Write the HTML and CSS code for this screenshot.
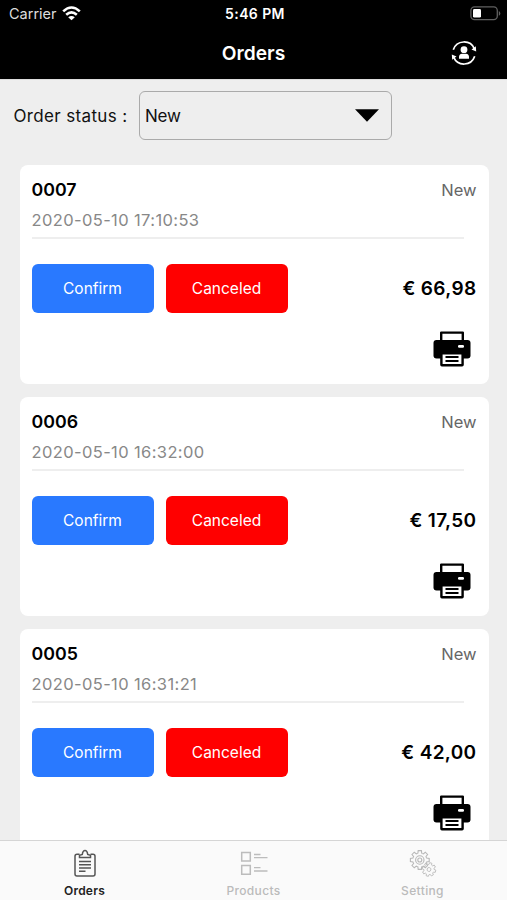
FILE: index.html
```
<!DOCTYPE html>
<html lang="en">
<head>
<meta charset="utf-8">
<title>Orders</title>
<link rel="stylesheet" href="styles.css">
</head>
<body>
<svg class="defs" aria-hidden="true">
  <symbol id="printer" viewBox="0 0 38 36">
    <path d="M8.2 10V1.6h21.6V10" fill="none" stroke="currentColor" stroke-width="2.4" stroke-linejoin="round"/>
    <rect x="0.5" y="9" width="37" height="18.6" rx="3" fill="currentColor"/>
    <rect x="25" y="14" width="6" height="2.8" rx="1.2" fill="#fff"/>
    <rect x="8.4" y="22.2" width="21.2" height="12" rx=".5" fill="#fff" stroke="currentColor" stroke-width="2.4"/>
    <path d="M12.5 26h13M12.5 30h13" stroke="currentColor" stroke-width="2"/>
  </symbol>
  <g id="gear">
    <path id="seg" d="M6.47-2.68 6.85-1.9 9.4-1.6V1.6L6.85 1.9 6.47 2.68"/>
    <use href="#seg" transform="rotate(45)"/><use href="#seg" transform="rotate(90)"/>
    <use href="#seg" transform="rotate(135)"/><use href="#seg" transform="rotate(180)"/>
    <use href="#seg" transform="rotate(225)"/><use href="#seg" transform="rotate(270)"/>
    <use href="#seg" transform="rotate(315)"/>
  </g>
</svg>
<div class="app">
  <header class="top">
    <div class="status">
      <div class="carrier"><span>Carrier</span>
        <svg width="19" height="15" viewBox="0 0 19 15" fill="none" stroke="#fff" stroke-width="2.6"><path d="M1.2 5.4Q9.5-2.4 17.8 5.4M4.2 8.8Q9.5 4 14.8 8.8"/><path d="M9.5 14.3 6.2 11.2Q9.5 8.7 12.8 11.2Z" fill="#fff" stroke="none"/></svg>
      </div>
      <span class="time">5:46 PM</span>
      <svg class="battery" width="31" height="15" viewBox="0 0 31 15"><rect x=".9" y=".9" width="26.4" height="12.8" rx="3.6" fill="none" stroke="#606060" stroke-width="1.3"/><rect x="3" y="3" width="8" height="8.6" rx="1.4" fill="#fff"/><path d="M28.8 5v4.8q1.5-.6 1.5-2.4t-1.5-2.4" fill="#606060"/></svg>
    </div>
    <div class="nav">
      <h1>Orders</h1>
      <svg class="sync" width="26" height="26" viewBox="0 0 26 26"><path d="M2.3 9.7A11.3 11.3 0 0 1 23.4 8.8M23.7 16.3A11.3 11.3 0 0 1 2.6 17.2" fill="none" stroke="#fff" stroke-width="1.7"/><path d="M20.5 9.5 24.8 6.3 25.2 11.4ZM5.5 16.5 1.2 19.7.8 14.6Z" fill="#fff"/><circle cx="13" cy="9.7" r="3.4" fill="#fff"/><path d="M8 18.7V17q0-3 3-3.2h4q3 .2 3 3.2v1.7z" fill="#fff"/></svg>
    </div>
  </header>
  <main>
    <div class="filter"><span class="label">Order status :</span>
      <div class="select"><span>New</span><svg width="24" height="13" viewBox="0 0 24 13"><path d="M0 .3h24L12 12.7z"/></svg></div>
    </div>
    <section class="card">
      <div class="row"><b class="num">0007</b><span class="state">New</span></div>
      <div class="date">2020-05-10 17:10:53</div>
      <div class="actions"><button class="confirm">Confirm</button><button class="cancel">Canceled</button><b class="price">€ 66,98</b></div>
      <svg class="print"><use href="#printer"/></svg>
    </section>
    <section class="card">
      <div class="row"><b class="num">0006</b><span class="state">New</span></div>
      <div class="date">2020-05-10 16:32:00</div>
      <div class="actions"><button class="confirm">Confirm</button><button class="cancel">Canceled</button><b class="price">€ 17,50</b></div>
      <svg class="print"><use href="#printer"/></svg>
    </section>
    <section class="card">
      <div class="row"><b class="num">0005</b><span class="state">New</span></div>
      <div class="date">2020-05-10 16:31:21</div>
      <div class="actions"><button class="confirm">Confirm</button><button class="cancel">Canceled</button><b class="price">€ 42,00</b></div>
      <svg class="print"><use href="#printer"/></svg>
    </section>
  </main>
  <nav class="tabs">
    <div class="tab active">
      <svg width="30" height="30" viewBox="0 0 30 30" fill="none" stroke="#555" stroke-width="1.5"><path d="M9.5 5.2H7q-2 0-2 2V25q0 2 2 2h16q2 0 2-2V7.2q0-2-2-2h-2.500"/><path d="M9.5 8.600V6.200l2.800-.8q.5-4 2.700-4t2.700 4l2.800.8v2.400z"/><path d="M9 12.500h12M9 15.800h12M9 19h12M9 22.300h6.500"/></svg>
      <span>Orders</span>
    </div>
    <div class="tab">
      <svg width="30" height="30" viewBox="0 0 30 30" fill="none" stroke="#bcbcbc" stroke-width="1.5"><path d="M2.7 3.5h8.600v8.600H2.7zM2.7 16.600h8.600v8.600H2.7z"/><path d="M15 5.500h6.500M15 8.700h13.500M15 18.700h6.500M15 22h13.500" stroke-width="1.300"/></svg>
      <span>Products</span>
    </div>
    <div class="tab">
      <svg width="30" height="30" viewBox="0 0 30 30" fill="none" stroke="#b8b8b8" stroke-width="1.100"><g transform="translate(11.800 11)"><use href="#gear"/><circle r="4.200"/><circle r="2"/></g><g transform="translate(21 20.500) rotate(15) scale(.72)"><use href="#gear"/><circle r="2.700"/></g></svg>
      <span>Setting</span>
    </div>
  </nav>
</div>
</body>
</html>
```
FILE: styles.css
```
* { box-sizing: border-box; }
body { margin: 0; font-family: Inter, "Liberation Sans", sans-serif; color: #111; }
.defs { display: none; }
.app { width: 507px; height: 900px; display: flex; flex-direction: column; overflow: hidden; background: #eee; }
.top { flex: none; height: 79px; background: #000; color: #fff; }
.status { height: 27px; padding: 0 6px 0 9px; display: grid; grid-template-columns: 1fr auto 1fr; align-items: center; font-size: 14.5px; }
.carrier { display: flex; align-items: center; gap: 5px; color: #ddd; }
.carrier svg { margin-top: -1px; }
.time { font-weight: 600; font-size: 14px; letter-spacing: .4px; }
.battery { justify-self: end; }
.nav { height: 51px; padding: 0 30px; display: grid; grid-template-columns: 1fr auto 1fr; align-items: center; }
.nav h1 { grid-column: 2; margin: 0; font-size: 19.2px; font-weight: 600; }
.sync { justify-self: end; }
main { flex: 1; min-height: 0; overflow: hidden; border-top: 1px solid #ddd; }
.filter { display: flex; align-items: center; height: 49px; margin: 11px 0 25px; padding-left: 13.5px; font-size: 17px; letter-spacing: .35px; }
.label { width: 125.5px; white-space: nowrap; }
.select { width: 253px; height: 49px; border: 1.5px solid #aaa; border-radius: 6px; padding: 0 12px 0 5px; display: flex; align-items: center; justify-content: space-between; letter-spacing: -.2px; }
.select svg { display: block; }
.card { width: 469px; height: 219px; margin: 0 0 13px 19.5px; padding: 12px 12px 0; background: #fff; border-radius: 8px; }
.row { display: flex; justify-content: space-between; align-items: center; height: 25px; }
.num { font-size: 17.8px; font-weight: 600; color: #000; }
.state { font-size: 16.5px; color: #666; }
.date { width: 432px; height: 37px; line-height: 36px; border-bottom: 2px solid #eee; font-size: 16.5px; letter-spacing: .38px; color: #888; }
.actions { display: flex; align-items: center; gap: 12px; margin-top: 24.5px; }
button { width: 122px; height: 49px; padding: 0; border: 0; border-radius: 6px; color: #fff; font: 400 15.5px Inter, sans-serif; }
.confirm { background: #2979ff; }
.cancel { background: #f00; }
.price { margin-left: auto; font-size: 19px; font-weight: 600; letter-spacing: .35px; color: #000; }
.print { display: block; width: 38px; height: 36px; margin: 18px 6px 0 auto; color: #000; }
.tabs { flex: none; height: 60px; display: grid; grid-template-columns: repeat(3, 1fr); background: #fafafa; border-top: 1px solid #d5d5d5; }
.tab { display: flex; flex-direction: column; align-items: center; padding-top: 8px; font-size: 12px; font-weight: 500; letter-spacing: .35px; line-height: 15px; color: #bbb; }
.tab svg { display: block; margin-bottom: 4px; }
.tab.active { color: #222; font-weight: 600; letter-spacing: .2px; }
```
